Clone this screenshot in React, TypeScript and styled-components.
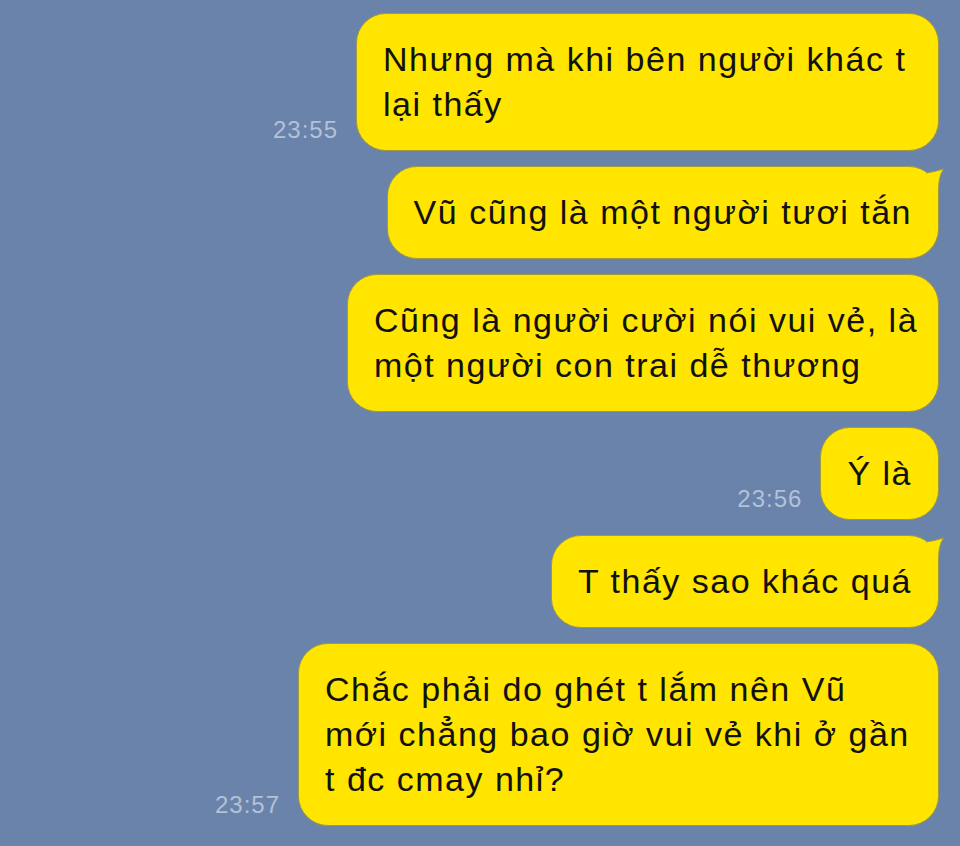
import React from "react";
import styled, { createGlobalStyle } from "styled-components";

const GlobalStyle = createGlobalStyle`
  html, body {
    margin: 0;
    padding: 0;
    background: #6983ab;
  }
  body {
    font-family: "Liberation Sans", Arial, sans-serif;
  }
`;

type Msg = {
  lines: string[];
  time?: string;
  tail?: boolean;
  width?: number;
};

const messages: Msg[] = [
  { lines: ["Nhưng mà khi bên người khác t", "lại thấy"], time: "23:55", width: 583 },
  { lines: ["Vũ cũng là một người tươi tắn"], tail: true },
  { lines: ["Cũng là người cười nói vui vẻ, là", "một người con trai dễ thương"], width: 592 },
  { lines: ["Ý là"], time: "23:56" },
  { lines: ["T thấy sao khác quá"], tail: true },
  {
    lines: ["Chắc phải do ghét t lắm nên Vũ", "mới chẳng bao giờ vui vẻ khi ở gần", "t đc cmay nhỉ?"],
    time: "23:57",
    width: 641,
  },
];

// the little ear on the top right corner of the first bubble in a run
const TAIL = "M8 7 Q16 6 25.5 3 Q20.5 10 20.5 24 L20.5 32";

const Chat = () => {
  return (
    <Screen>
      {messages.map((m, i) => (
        <Row key={i}>
          {m.time && <Time>{m.time}</Time>}
          <Bubble $w={m.width}>
            {m.lines.map((l, j) => (
              <Line key={j}>{l}</Line>
            ))}
            {m.tail && (
              <Tail viewBox="0 0 26 32" width="26" height="32">
                <path d={TAIL + " L0 32 L0 20 Z"} fill="#ffe500" />
                <path d={TAIL} fill="none" stroke="#a09a45" strokeWidth="1" />
              </Tail>
            )}
          </Bubble>
        </Row>
      ))}
    </Screen>
  );
};

export default function App() {
  return (
    <>
      <GlobalStyle />
      <Chat />
    </>
  );
}

const Screen = styled.div`
  width: 960px;
  height: 846px;
  box-sizing: border-box;
  padding: 13px 21px 0 0;
  display: flex;
  flex-direction: column;
  gap: 15px;
  overflow: hidden;
`;

const Row = styled.div`
  display: flex;
  justify-content: flex-end;
  align-items: flex-end;
  gap: 18px;
`;

const Time = styled.span`
  font-size: 24px;
  color: #b4c1d6;
  margin-bottom: 7px;
  letter-spacing: 1px;
`;

const Bubble = styled.div<{ $w?: number }>`
  position: relative;
  box-sizing: border-box;
  width: ${(p) => (p.$w ? `${p.$w}px` : "auto")};
  padding: 23px 26px;
  background: #ffe500;
  border: 1px solid #a09a45;
  border-radius: 30px;
  color: #111;
  font-size: 34px;
  line-height: 45px;
  letter-spacing: 1.5px;
`;

const Line = styled.div`
  white-space: nowrap;
`;

const Tail = styled.svg`
  position: absolute;
  top: -1px;
  right: -6px;
  display: block;
`;
